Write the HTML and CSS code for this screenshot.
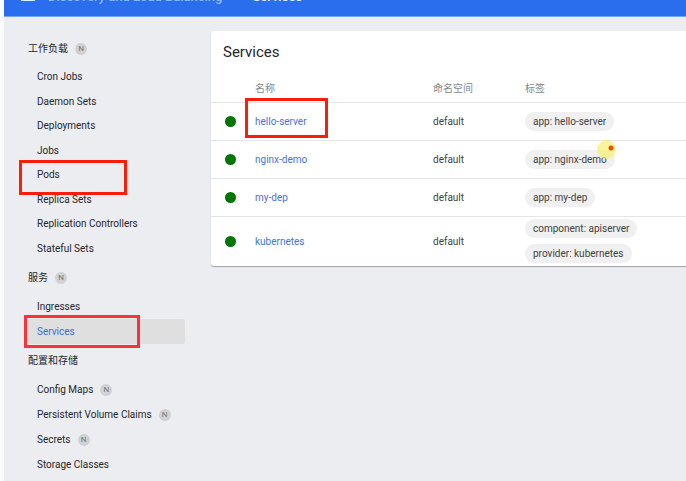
FILE: index.html
```html
<!DOCTYPE html>
<html lang="zh-CN">
<head>
<meta charset="utf-8">
<title>Services</title>
<link rel="stylesheet" href="styles.css">
</head>
<body>
<header class="topbar">
  <button class="menu" aria-label="Menu"><svg width="14" height="11" viewBox="0 0 14 11"><path d="M0 0h14v2H0zM0 4h14v2H0zM0 9h14v2H0z" fill="#d8f2ff"/></svg></button>
  <nav class="crumbs"><a href="#">Discovery and Load Balancing</a><span class="sep">›</span><span class="current">Services</span></nav>
</header>
<div class="layout">
  <nav class="sidebar">
    <h2>工作负载<span class="badge">N</span></h2>
    <ul class="workloads">
      <li><a href="#">Cron Jobs</a></li>
      <li><a href="#">Daemon Sets</a></li>
      <li><a href="#">Deployments</a></li>
      <li><a href="#">Jobs</a></li>
      <li class="mark-pods"><a href="#">Pods</a></li>
      <li><a href="#">Replica Sets</a></li>
      <li><a href="#">Replication Controllers</a></li>
      <li><a href="#">Stateful Sets</a></li>
    </ul>
    <h2>服务<span class="badge">N</span></h2>
    <ul>
      <li><a href="#">Ingresses</a></li>
      <li class="mark-services"><a class="active" href="#">Services</a></li>
    </ul>
    <h2>配置和存储</h2>
    <ul>
      <li><a href="#">Config Maps<span class="badge">N</span></a></li>
      <li><a href="#">Persistent Volume Claims<span class="badge">N</span></a></li>
      <li><a href="#">Secrets<span class="badge">N</span></a></li>
      <li><a href="#">Storage Classes</a></li>
    </ul>
  </nav>
  <main class="card">
    <h1>Services</h1>
    <table>
      <thead>
        <tr><th class="status"></th><th class="name">名称</th><th class="space">命名空间</th><th>标签</th></tr>
      </thead>
      <tbody>
        <tr><td class="status"><span class="dot"></span></td><td class="text"><a class="mark-name" href="#">hello-server</a></td><td class="text">default</td><td><div class="chips"><span class="chip">app: hello-server</span></div></td></tr>
        <tr><td class="status"><span class="dot"></span></td><td class="text"><a href="#">nginx-demo</a></td><td class="text">default</td><td><div class="chips"><span class="chip pointer">app: nginx-demo</span></div></td></tr>
        <tr><td class="status"><span class="dot"></span></td><td class="text"><a href="#">my-dep</a></td><td class="text">default</td><td><div class="chips"><span class="chip">app: my-dep</span></div></td></tr>
        <tr class="tall"><td class="status"><span class="dot"></span></td><td class="text"><a href="#">kubernetes</a></td><td class="text">default</td><td><div class="chips"><span class="chip">component: apiserver</span><span class="chip">provider: kubernetes</span></div></td></tr>
      </tbody>
    </table>
  </main>
</div>
</body>
</html>
```
FILE: styles.css
```css
*,
*::before,
*::after {
  box-sizing: border-box;
}

body {
  margin: 0;
  padding-left: 4px;
  min-height: 100vh;
  display: flex;
  flex-direction: column;
  background: #fbfcfe;
  color: #25272a;
  font: 10px/16px Roboto, "Noto Sans CJK SC", sans-serif;
}

a {
  color: inherit;
  text-decoration: none;
}

.topbar {
  display: flex;
  align-items: flex-end;
  height: 17px;
  padding: 0 17px 11px;
  overflow: hidden;
  background: #2a6eee;
  border-bottom: 1px solid #77a5f3;
}

.menu {
  display: flex;
  margin: 0 13px 4px 0;
  padding: 0;
  border: 0;
  background: none;
}

.crumbs {
  display: flex;
  font-size: 13px;
  font-weight: 500;
  line-height: 16px;
  white-space: nowrap;
  color: #8fb9fa;
}

.sep {
  margin: 0 13px;
}

.current {
  color: #e6f2ff;
}

.layout {
  flex: 1;
  display: flex;
  align-items: flex-start;
  background: #ecedf0;
}

.sidebar {
  flex: none;
  width: 207px;
  padding: 20px 26px 0 24px;
}

.sidebar h2 {
  display: flex;
  align-items: center;
  height: 24px;
  margin: 0 0 4px;
  font-size: 10px;
  font-weight: 400;
}

.sidebar ul {
  display: grid;
  margin: 0 0 5px;
  padding: 0;
  list-style: none;
}

.sidebar .workloads {
  min-height: 196px;
}

.sidebar li {
  position: relative;
  display: grid;
  min-height: 24px;
}

.sidebar li a {
  display: flex;
  align-items: center;
  min-height: 24px;
  padding-left: 9px;
  border-radius: 2px;
}

.sidebar ul:not(.workloads) li {
  min-height: 25px;
}

.sidebar a.active {
  color: #3c6be0;
  background: #dfdfdf;
}

.badge {
  width: 12px;
  height: 12px;
  margin-left: 7px;
  border-radius: 50%;
  background: #d0d1d3;
  color: #77797c;
  font-size: 8px;
  line-height: 12px;
  text-align: center;
}

.card {
  flex: 1;
  min-width: 0;
  margin-top: 14px;
  background: #fff;
  border-radius: 3px 0 0 3px;
  box-shadow: 0 1px 1px #a0a0a4;
}

.card h1 {
  margin: 0;
  padding: 10px 12px;
  font-size: 15px;
  font-weight: 400;
  line-height: 22px;
}

table {
  width: 100%;
  border-collapse: collapse;
  table-layout: fixed;
}

th {
  height: 29px;
  padding: 3px 0 0;
  text-align: left;
  font-weight: 400;
  color: #85878a;
}

td {
  height: 38px;
  padding: 0;
  border-top: 1px solid #e4e5e7;
  color: #3f4143;
}

.text {
  padding-top: 2px;
}

.tall td {
  height: 50px;
}

td a {
  position: relative;
  color: #4673dc;
}

.status {
  width: 44px;
  padding-left: 14px;
}

.name {
  width: 178px;
}

.space {
  width: 92px;
}

.dot {
  display: block;
  width: 11px;
  height: 11px;
  border-radius: 50%;
  background: #007500;
}

.chips {
  display: flex;
  flex-direction: column;
  align-items: flex-start;
  gap: 6px;
}

.chip {
  position: relative;
  padding: 0 8px;
  border-radius: 10px;
  background: #f0f0f0;
  line-height: 19px;
}

.mark-pods::after,
.mark-services::after,
.mark-name::after {
  content: "";
  position: absolute;
  border: 3px solid #f91d0c;
  pointer-events: none;
}

.mark-pods::after {
  top: -3px;
  left: -9px;
  width: 108px;
  height: 35px;
}

.mark-services::after {
  top: -4px;
  left: -4px;
  width: 116px;
  height: 33px;
  border-color: #fc3336;
}

.mark-name::after {
  top: -18px;
  left: -10px;
  width: 83px;
  height: 40px;
}

.pointer::before {
  content: "";
  position: absolute;
  top: -10px;
  left: 72px;
  width: 19px;
  height: 19px;
  border-radius: 50%;
  background: radial-gradient(circle at 14px 8px, #f0500e 2px, rgba(247, 240, 100, 0.65) 3px);
}
```
